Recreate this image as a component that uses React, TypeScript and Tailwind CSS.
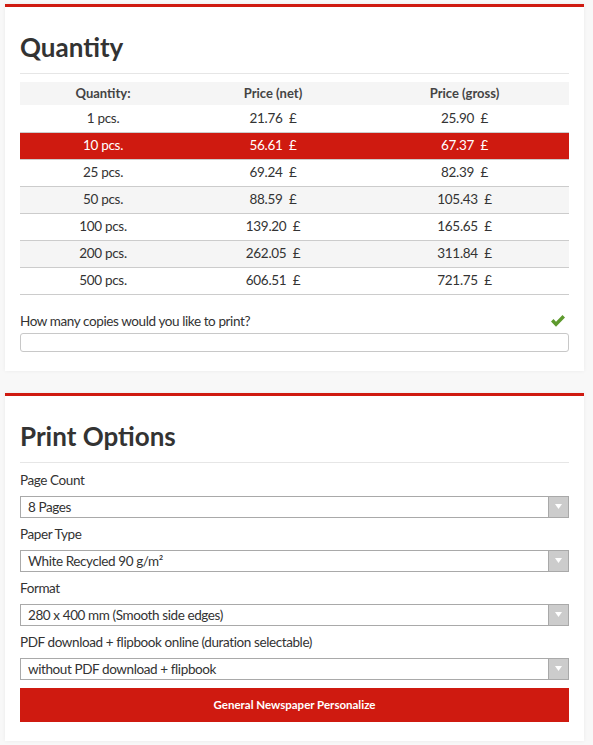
import React from 'react';

const ROWS = [
  { qty: '1 pcs.', net: '21.76', gross: '25.90' },
  { qty: '10 pcs.', net: '56.61', gross: '67.37', active: true },
  { qty: '25 pcs.', net: '69.24', gross: '82.39' },
  { qty: '50 pcs.', net: '88.59', gross: '105.43' },
  { qty: '100 pcs.', net: '139.20', gross: '165.65' },
  { qty: '200 pcs.', net: '262.05', gross: '311.84' },
  { qty: '500 pcs.', net: '606.51', gross: '721.75' },
];

const OPTIONS = [
  { label: 'Page Count', value: '8 Pages' },
  { label: 'Paper Type', value: 'White Recycled 90 g/m²' },
  { label: 'Format', value: '280 x 400 mm (Smooth side edges)' },
  { label: 'PDF download + flipbook online (duration selectable)', value: 'without PDF download + flipbook' },
];

const Select = ({ value }: { value: string }) => (
  <div className="flex h-[22px] border border-[#a9a9a9] bg-white">
    <div className="flex-1 pl-[7px] text-[13.5px] leading-[20px] tracking-[-0.4px] text-[#333]">{value}</div>
    <div className="flex w-[20px] items-center justify-center border-l border-[#a9a9a9] bg-[#cccccc]">
      <svg width="7" height="5" viewBox="0 0 7 5">
        <path d="M0 0 L7 0 L3.5 5 Z" fill="#ffffff" />
      </svg>
    </div>
  </div>
);

const Card = ({ title, children, className }: { title: string; children: React.ReactNode; className?: string }) => (
  <div className={`ml-[5px] mr-[9px] border-t-[3px] border-[#cf1a10] bg-white px-[15px] shadow-[0_0_4px_rgba(0,0,0,0.06)] ${className ?? ''}`}>
    <h2 className="border-b border-[#e6e6e6] pt-[24px] pb-[10px] text-[26px] leading-[32px] font-bold text-[#333]">{title}</h2>
    {children}
  </div>
);

export default function App() {
  return (
    <div className="min-h-[745px] bg-[#f8f8f8] pt-[4px] text-[#333]" style={{ fontFamily: 'Lato, "Liberation Sans", sans-serif' }}>
      <Card title="Quantity">
        <table className="mt-[8px] w-full border-collapse text-[13.5px] tracking-[-0.3px]">
          <thead>
            <tr className="h-[23px] bg-[#f5f5f5] text-[13px] tracking-normal text-[#444]">
              <th className="w-[166px] text-center font-bold">Quantity:</th>
              <th className="w-[174px] text-center font-bold">Price (net)</th>
              <th className="text-center font-bold">Price (gross)</th>
            </tr>
          </thead>
          <tbody>
            {ROWS.map((r, i) => (
              <tr
                key={r.qty}
                className={`h-[27px] border-b border-[#cccccc] ${r.active ? 'bg-[#cf1a10] text-white' : i % 2 === 1 ? 'bg-[#f5f5f5]' : 'bg-white'}`}
              >
                <td className="text-center">{r.qty}</td>
                <td className="text-center">{r.net}&nbsp; £</td>
                <td className="text-center">{r.gross}&nbsp; £</td>
              </tr>
            ))}
          </tbody>
        </table>
        <div className="mt-[16px] flex items-center justify-between text-[13.5px] tracking-[-0.4px]">
          <span>How many copies would you like to print?</span>
          <svg width="16" height="14" viewBox="0 0 16 14" className="mr-[3px]">
            <path d="M1 7.5 L3.5 5 L6 7.8 L12.5 1 L15 3.5 L6 12.8 Z" fill="#5e9a2e" />
          </svg>
        </div>
        <div className="mt-[2px] h-[19px] rounded-[3px] border border-[#c8c8c8] bg-white" />
        <div className="h-[19px]" />
      </Card>

      <Card title="Print Options" className="mt-[22px]">
        <div className="pt-[8px]">
          {OPTIONS.map((o) => (
            <div key={o.label} className="mb-[7px]">
              <div className="mb-[7px] pt-[1px] text-[13.5px] leading-[17px] tracking-[-0.4px]">{o.label}</div>
              <Select value={o.value} />
            </div>
          ))}
          <button className="mt-[1px] h-[34px] w-full bg-[#cf1a10] text-[11.5px] font-bold text-white">
            General Newspaper Personalize
          </button>
        </div>
        <div className="h-[19px]" />
      </Card>
    </div>
  );
}
